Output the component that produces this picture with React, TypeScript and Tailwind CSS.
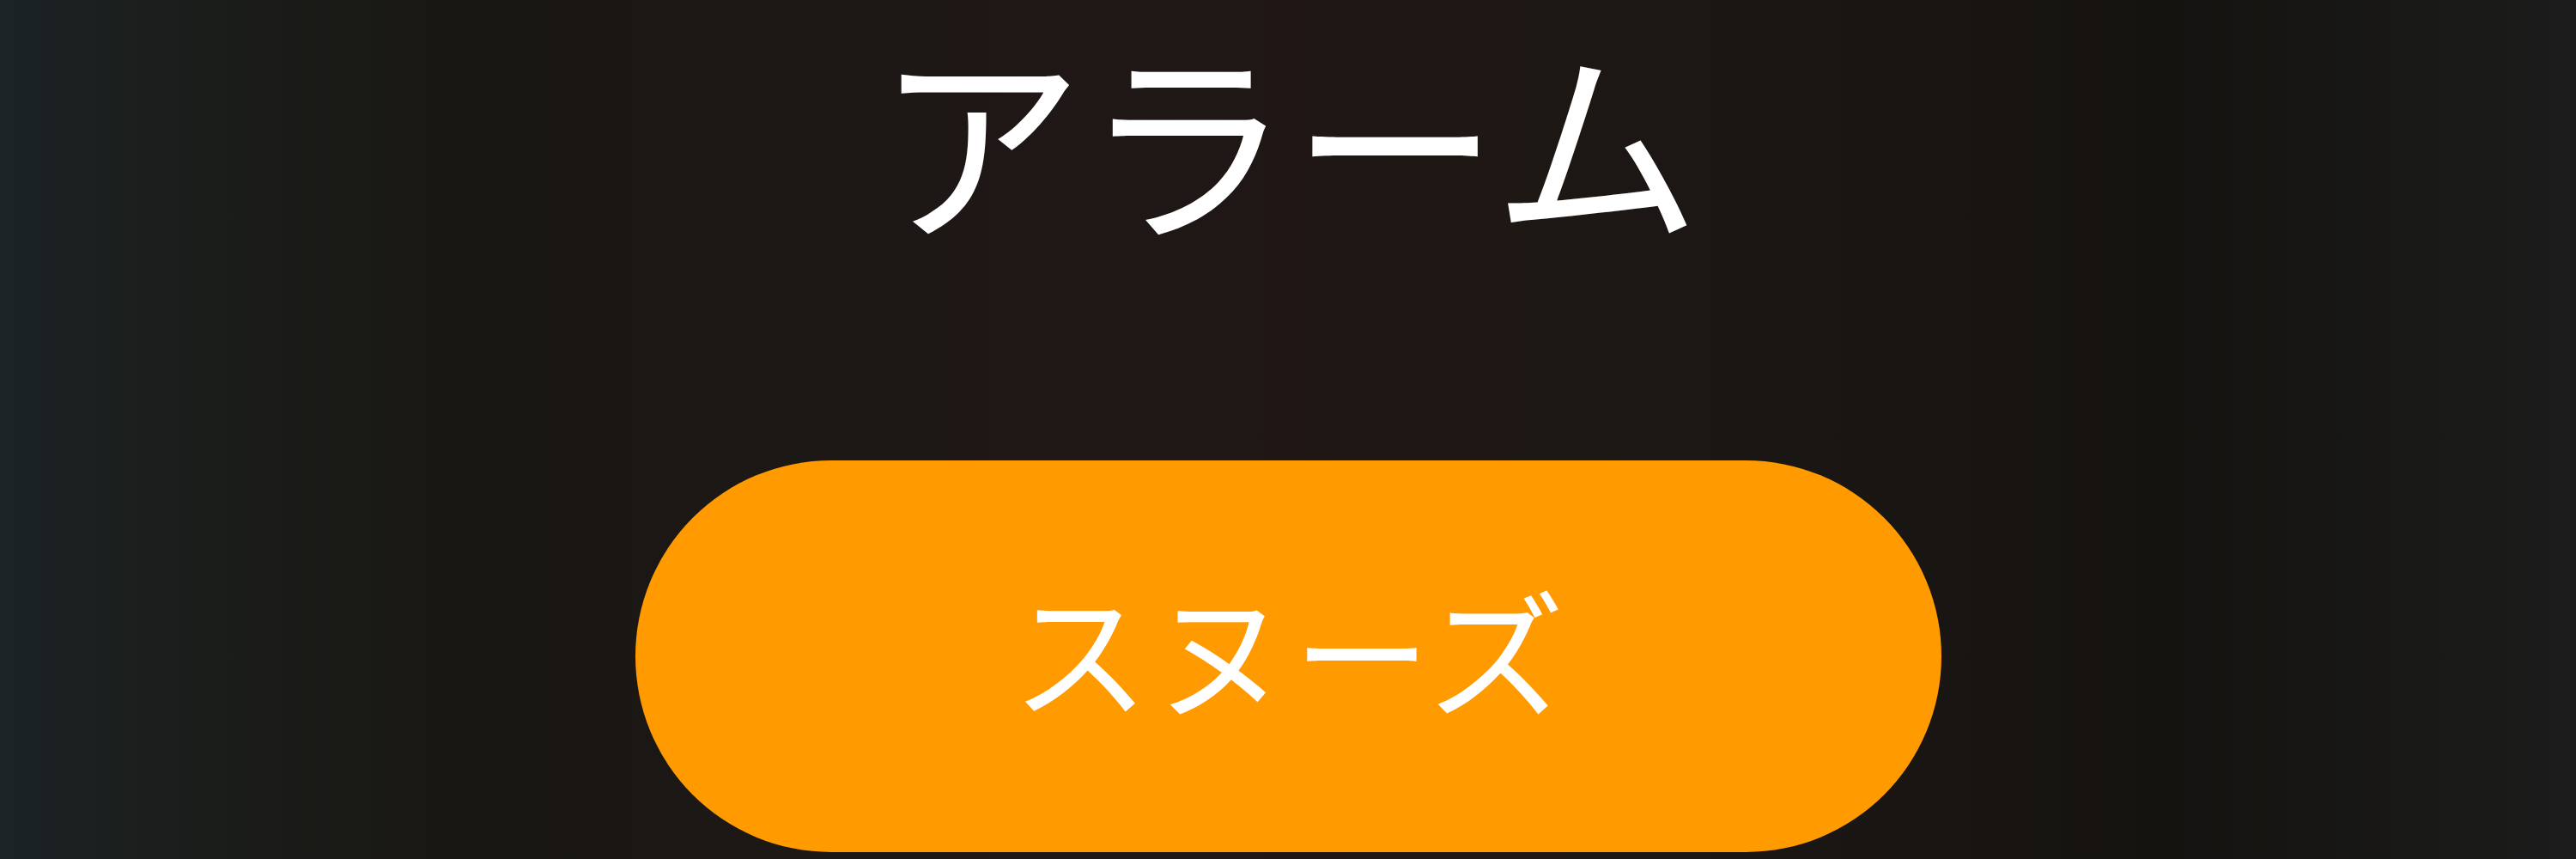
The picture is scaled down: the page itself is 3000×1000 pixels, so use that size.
export default function App() {
  return (
    <div
      className="flex h-[1000px] w-full flex-col items-center overflow-hidden bg-[linear-gradient(90deg,#1c2326_0%,#1b1e1c_6%,#191713_18%,#1d1815_32%,#201715_50%,#1c1714_66%,#151310_84%,#1b1c1b_100%)]"
      style={{ fontFamily: '"Noto Sans CJK JP", "Noto Sans", sans-serif' }}
    >
      <h1 className="mt-[1px] text-[242px] font-normal leading-[1.3] text-white">
        アラーム
      </h1>
      <button className="mt-[220px] flex h-[456px] w-[1521px] shrink-0 items-center justify-center rounded-full bg-[#ff9a00] pb-[20px]">
        <span className="pl-[4px] text-[160px] font-normal leading-[1.3] tracking-[4px] text-white">
          スヌーズ
        </span>
      </button>
    </div>
  );
}
